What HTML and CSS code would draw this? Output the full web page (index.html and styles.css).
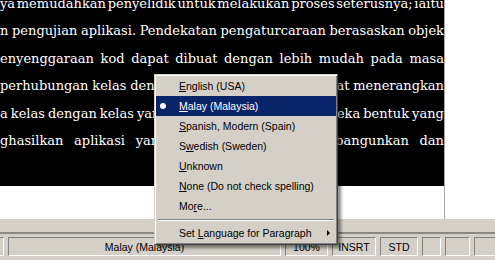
FILE: index.html
```html
<!DOCTYPE html>
<html>
<head>
<meta charset="utf-8">
<link rel="stylesheet" href="styles.css">
</head>
<body>
<div class="doc">
  <div class="page">
    <div class="sel">
      <div class="text">
        <div class="ln"><span>ya</span><span>memudahkan</span><span>penyelidik</span><span>untuk</span><span>melakukan</span><span>proses</span><span>seterusnya;</span><span>iaitu</span></div>
        <div class="ln"><span>n</span><span>pengujian</span><span>aplikasi.</span><span>Pendekatan</span><span>pengaturcaraan</span><span>berasaskan</span><span>objek</span></div>
        <div class="ln"><span>enyenggaraan</span><span>kod</span><span>dapat</span><span>dibuat</span><span>dengan</span><span>lebih</span><span>mudah</span><span>pada</span><span>masa</span></div>
        <div class="ln"><span>perhubungan</span><span>kelas</span><span>dengan</span><span>kelas</span><span>yang</span><span>lainnya,</span><span>dapat</span><span>menerangkan</span></div>
        <div class="ln"><span>a</span><span>kelas</span><span>dengan</span><span>kelas</span><span>yang</span><span>lain</span><span>dalam</span><span>satu</span><span>rajah</span><span>mereka</span><span>bentuk</span><span>yang</span></div>
        <div class="ln"><span>ghasilkan</span><span>aplikasi</span><span>yang</span><span>cekap,</span><span>mudah</span><span>dan</span><span>dibangunkan</span><span>dan</span></div>
      </div>
    </div>
  </div>
  <div class="margin"></div>
</div>
<div class="band"></div>
<div class="status">
  <div class="panel p1"></div>
  <div class="panel p2">Malay (Malaysia)</div>
  <div class="panel p3">100%</div>
  <div class="panel p4">INSRT</div>
  <div class="panel p5">STD</div>
  <div class="panel p6"></div>
  <div class="panel p7"></div>
  <div class="panel p8"></div>
</div>

<div class="menu">
  <div class="item"><span class="mark"></span><span class="label"><u>E</u>nglish (USA)</span></div>
  <div class="item active"><span class="mark"><span class="dot"></span></span><span class="label"><u>M</u>alay (Malaysia)</span></div>
  <div class="item"><span class="mark"></span><span class="label"><u>S</u>panish, Modern (Spain)</span></div>
  <div class="item"><span class="mark"></span><span class="label">S<u>w</u>edish (Sweden)</span></div>
  <div class="item"><span class="mark"></span><span class="label"><u>U</u>nknown</span></div>
  <div class="item"><span class="mark"></span><span class="label"><u>N</u>one (Do not check spelling)</span></div>
  <div class="item"><span class="mark"></span><span class="label">Mo<u>r</u>e...</span></div>
  <div class="sep"></div>
  <div class="item"><span class="mark"></span><span class="label">Set <u>L</u>anguage for Paragraph</span><span class="arrow"></span></div>
</div>
</body>
</html>
```
FILE: styles.css
```css
html, body {
  margin: 0;
  padding: 0;
}
body {
  width: 495px;
  height: 260px;
  overflow: hidden;
  background: #d4d0c8;
  position: relative;
  font-family: "Liberation Sans", Arial, sans-serif;
  font-size: 10.5px;
  color: #000;
}
.doc {
  height: 219px;
  background: #fff;
  display: flex;
}
.page {
  width: 444px;
  border-right: 1px solid #a8a8a8;
  flex: none;
}
.margin {
  flex: 1;
  background: #fff;
}
.sel {
  background: #000;
  height: 186px;
  overflow: hidden;
  color: #fff;
  font-family: "DejaVu Serif", serif;
  font-size: 13px;
  line-height: 27.4px;
}
.text {
  margin-top: -10px;
}
.ln {
  display: flex;
  justify-content: space-between;
  white-space: nowrap;
}
.band {
  height: 13px;
  border-bottom: 2px solid #8a8884;
}
.status {
  display: flex;
  gap: 4px;
  padding-top: 3px;
  margin-left: -10px;
}
.panel {
  height: 17px;
  line-height: 18px;
  border-top: 1px solid #808080;
  border-left: 1px solid #808080;
  border-bottom: 1px solid #fff;
  border-right: 1px solid #fff;
  text-align: center;
  flex: none;
  white-space: nowrap;
}
.p1 { width: 12px; }
.p2 { width: 271px; }
.p3 { width: 41px; }
.p4 { width: 42px; }
.p5 { width: 36px; }
.p6 { width: 17px; }
.p7 { width: 23px; }
.p8 { width: 40px; }

.menu {
  position: absolute;
  left: 154px;
  top: 74px;
  width: 180px;
  padding: 1px;
  border: 1px solid;
  border-color: #d4d0c8 #404040 #404040 #d4d0c8;
  background: #d4d0c8;
  box-shadow: inset 1px 1px 0 #fff, inset -1px -1px 0 #808080, 3px 3px 3px rgba(0, 0, 0, 0.45);
}
.item {
  height: 20px;
  line-height: 20px;
  display: flex;
  align-items: center;
  white-space: nowrap;
}
.item.active {
  background: #0a246a;
  color: #fff;
}
.mark {
  width: 23px;
  flex: none;
  display: flex;
  align-items: center;
}
.dot {
  width: 6px;
  height: 6px;
  border-radius: 50%;
  background: #fff;
  margin-left: 4px;
}
.label {
  flex: 1;
}
.arrow {
  width: 0;
  height: 0;
  border-top: 3px solid transparent;
  border-bottom: 3px solid transparent;
  border-left: 3px solid #000;
  margin-right: 6px;
}
.sep {
  margin: 3px 2px 2px;
  border-top: 1px solid #808080;
  border-bottom: 1px solid #fff;
}
```
